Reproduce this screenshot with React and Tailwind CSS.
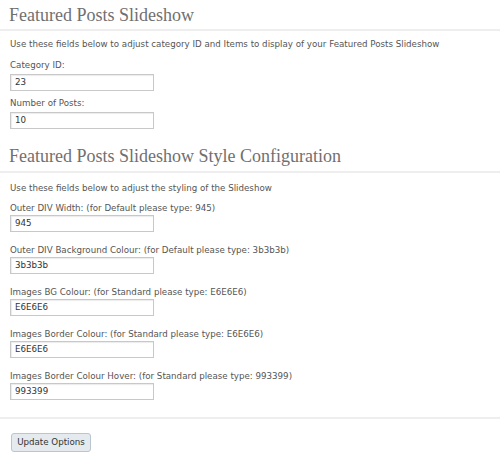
import React from "react";

const serif = { fontFamily: '"Liberation Serif", "DejaVu Serif", serif' };

function Field({ label, value, cls, gap = "mt-[3px]" }) {
  return (
    <div className={cls}>
      <div className="leading-[12px] text-[#555]">{label}</div>
      <div
        className={
          gap +
          " h-[17px] w-[144px] border border-[#c8c8c8] bg-white pl-[4px] leading-[15px] text-[#333] shadow-[inset_1px_1px_1px_rgba(0,0,0,0.08)]"
        }
      >
        {value}
      </div>
    </div>
  );
}

export default function App() {
  return (
    <div
      className="w-[500px] h-[458px] overflow-hidden bg-white text-[8.7px]"
      style={{ fontFamily: '"DejaVu Sans", "Liberation Sans", sans-serif' }}
    >
      <h2
        className="pl-[9px] pt-[5px] pb-[4px] text-[18px] leading-[20px] text-[#707070] border-b-2 border-[#eeeeee]"
        style={serif}
      >
        Featured Posts Slideshow
      </h2>
      <div className="pl-[10px]">
        <p className="mt-[7px] leading-[12px] text-[#555]">
          Use these fields below to adjust category ID and Items to display of your Featured Posts Slideshow
        </p>
        <Field cls="mt-[9px]" label="Category ID:" value="23" />
        <Field cls="mt-[6px]" label="Number of Posts:" value="10" />
      </div>
      <h2
        className="mt-[17px] pl-[9px] pb-[5px] text-[18px] leading-[20px] text-[#707070] border-b-2 border-[#eeeeee]"
        style={serif}
      >
        Featured Posts Slideshow Style Configuration
      </h2>
      <div className="pl-[10px]">
        <p className="mt-[9px] leading-[12px] text-[#555]">
          Use these fields below to adjust the styling of the Slideshow
        </p>
        <Field cls="mt-[8px]" gap="mt-[1px]" label="Outer DIV Width: (for Default please type: 945)" value="945" />
        <Field cls="mt-[12px]" gap="mt-[1px]" label="Outer DIV Background Colour: (for Default please type: 3b3b3b)" value="3b3b3b" />
        <Field cls="mt-[12px]" gap="mt-[1px]" label="Images BG Colour: (for Standard please type: E6E6E6)" value="E6E6E6" />
        <Field cls="mt-[12px]" gap="mt-[1px]" label="Images Border Colour: (for Standard please type: E6E6E6)" value="E6E6E6" />
        <Field cls="mt-[12px]" gap="mt-[1px]" label="Images Border Colour Hover: (for Standard please type: 993399)" value="993399" />
      </div>
      <div className="mt-[17px] border-t-2 border-[#eeeeee]" />
      <div className="pl-[11px] mt-[14px]">
        <button className="h-[19px] w-[80px] rounded-[3px] border border-[#b9c6d0] bg-[#e4eaee] text-[8.7px] text-[#333] leading-[17px]">
          Update Options
        </button>
      </div>
    </div>
  );
}
